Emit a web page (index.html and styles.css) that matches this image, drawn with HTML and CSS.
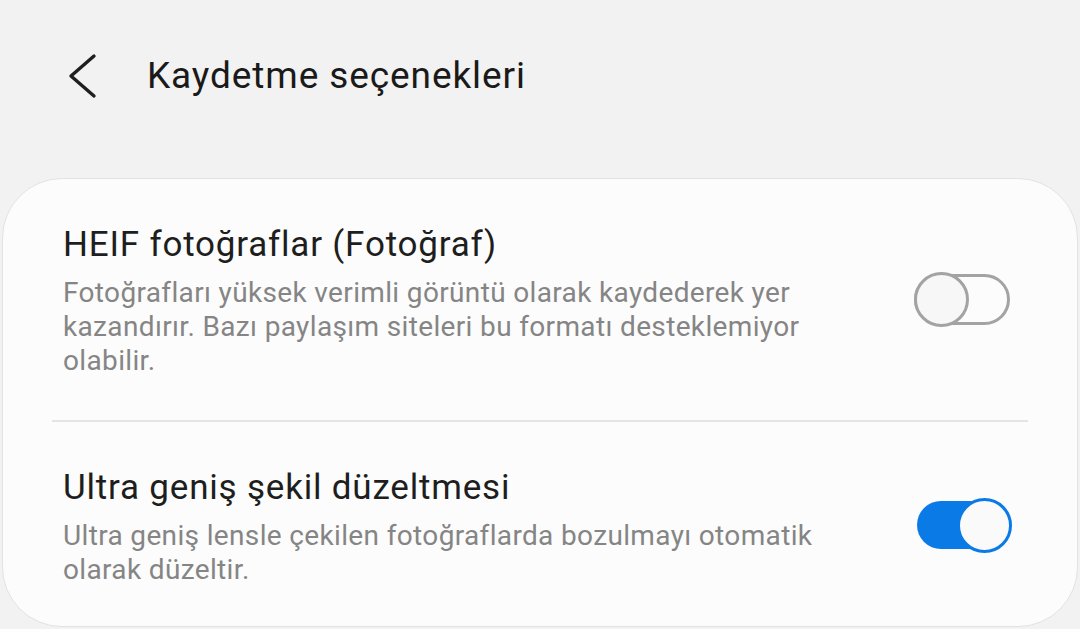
FILE: index.html
```html
<!DOCTYPE html>
<html lang="tr">
<head>
    <meta charset="UTF-8">
    <meta name="viewport" content="width=device-width, initial-scale=1.0">
    <title>Kaydetme seçenekleri</title>
    <link rel="stylesheet" href="styles.css">
</head>
<body>
    <header class="top-bar">
        <svg class="back-icon" width="34" height="48" viewBox="0 0 34 48">
            <polyline points="30,4 7,24 30,44" fill="none" stroke="#1f1f1f" stroke-width="3.4" stroke-linecap="round" stroke-linejoin="round"/>
        </svg>
        <h1 class="page-title">Kaydetme seçenekleri</h1>
    </header>

    <div class="settings-card">
        <div class="setting-row">
            <div class="setting-text">
                <div class="setting-title">HEIF fotoğraflar (Fotoğraf)</div>
                <div class="setting-desc">Fotoğrafları yüksek verimli görüntü olarak kaydederek yer kazandırır. Bazı paylaşım siteleri bu formatı desteklemiyor olabilir.</div>
            </div>
            <div class="switch">
                <div class="track"></div>
                <div class="thumb"></div>
            </div>
        </div>

        <div class="divider"></div>

        <div class="setting-row">
            <div class="setting-text">
                <div class="setting-title">Ultra geniş şekil düzeltmesi</div>
                <div class="setting-desc">Ultra geniş lensle çekilen fotoğraflarda bozulmayı otomatik olarak düzeltir.</div>
            </div>
            <div class="switch on">
                <div class="track"></div>
                <div class="thumb"></div>
            </div>
        </div>
    </div>
</body>
</html>
```

FILE: styles.css
```css
/* General Styling */
body {
    margin: 0;
    font-family: Roboto, "Noto Sans", sans-serif;
    background: #f2f2f2;
    color: #1e1e1e;
    height: 629px;
    overflow: hidden;
}

.top-bar {
    display: flex;
    align-items: center;
    padding: 52px 0 0 64px;
    height: 48px;
}

.back-icon {
    flex-shrink: 0;
}

.page-title {
    margin: 0 0 0 49px;
    font-size: 37px;
    font-weight: 400;
    line-height: 44px;
    letter-spacing: 0.9px;
    color: #1a1a1a;
}

/* Card */
.settings-card {
    margin: 78px 2px 0;
    background: #fcfcfc;
    border: 1px solid #e2e2e2;
    border-radius: 60px;
}

.setting-row {
    display: flex;
    align-items: center;
    padding: 45px 67px 42px 60px;
}

.setting-row:last-child {
    padding-bottom: 39px;
}

.setting-text {
    flex: 1;
    max-width: 775px;
}

.setting-title {
    font-size: 35px;
    line-height: 42px;
    letter-spacing: 0.8px;
}

.setting-desc {
    margin-top: 10px;
    font-size: 28px;
    line-height: 34px;
    letter-spacing: 0.35px;
    color: #858585;
}

.divider {
    height: 2px;
    margin: 0 49px;
    background: #e4e4e4;
}

/* Switch */
.switch {
    position: relative;
    margin-left: auto;
    margin-top: -4px;
    width: 96px;
    height: 55px;
    display: flex;
    align-items: center;
}

.track {
    width: 100%;
    height: 51px;
    box-sizing: border-box;
    border: 3px solid #a3a3a3;
    border-radius: 26px;
}

.thumb {
    position: absolute;
    top: 0;
    left: 0;
    width: 55px;
    height: 55px;
    box-sizing: border-box;
    border: 3px solid #a3a3a3;
    border-radius: 50%;
    background: #f7f7f7;
}

.switch.on .track {
    height: 48px;
    margin-left: 3px;
    border: none;
    background: #0a7be6;
}

.switch.on .thumb {
    left: auto;
    right: -2px;
    border-color: #0a7be6;
    background: #fafafa;
}
```
